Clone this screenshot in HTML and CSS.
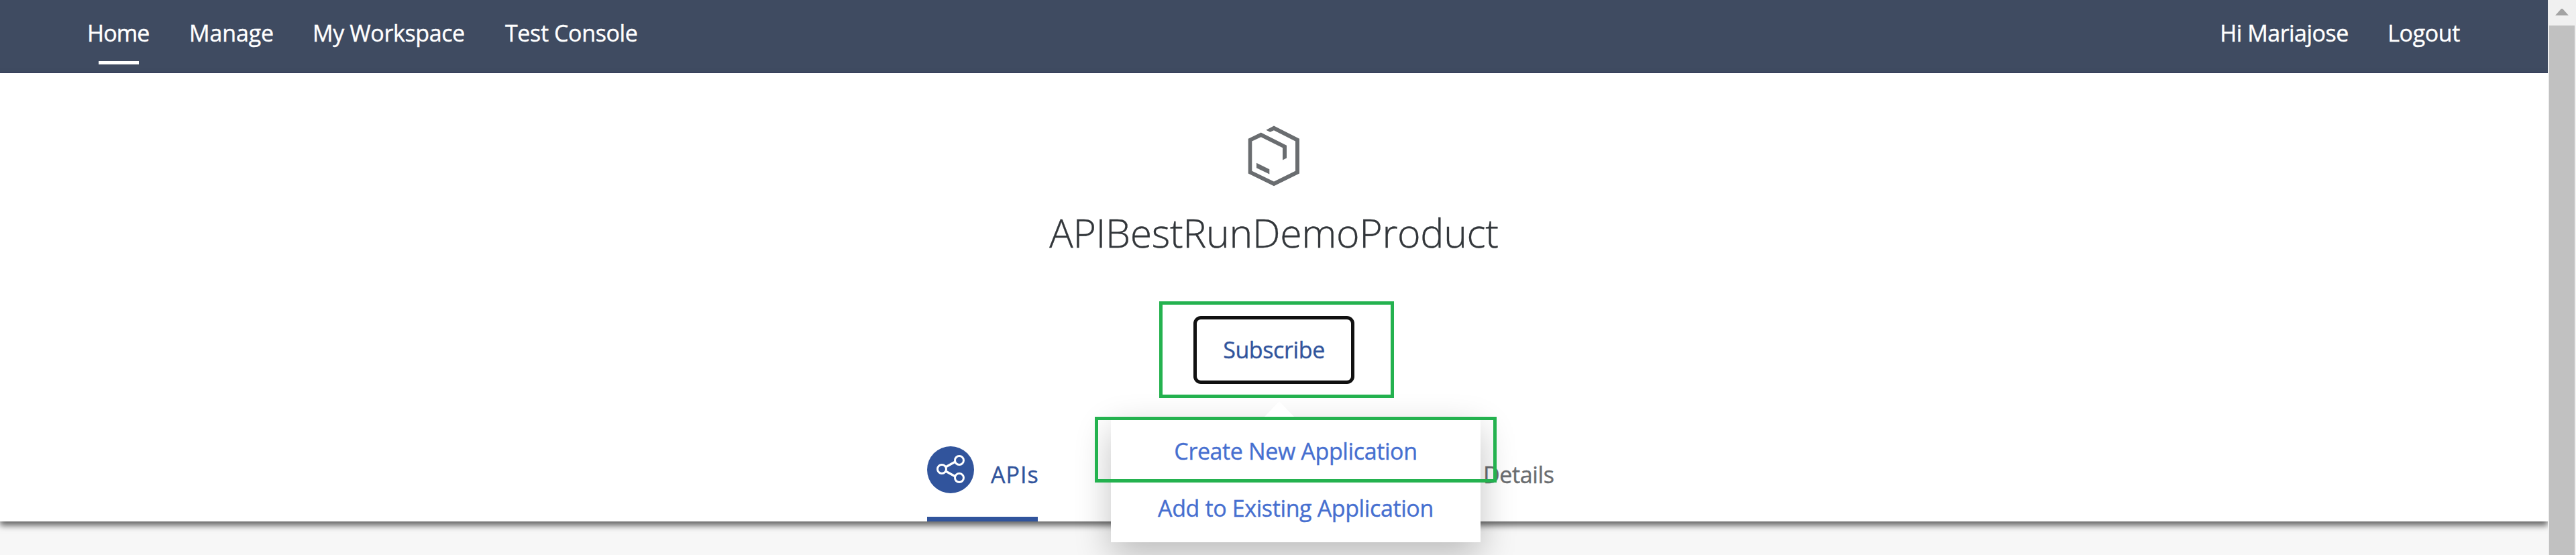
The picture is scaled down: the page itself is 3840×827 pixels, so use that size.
FILE: index.html
```html
<!DOCTYPE html>
<html lang="en">
<head>
<meta charset="utf-8">
<title>APIBestRunDemoProduct</title>
<link rel="stylesheet" href="styles.css">
</head>
<body>
<div class="window">
  <div class="page">
    <header class="topbar">
      <nav class="nav">
        <a class="nav-item active home">Home</a>
        <a class="nav-item manage">Manage</a>
        <a class="nav-item workspace">My Workspace</a>
        <a class="nav-item">Test Console</a>
      </nav>
      <div class="user">
        <a class="nav-item greeting">Hi Mariajose</a>
        <a class="nav-item">Logout</a>
      </div>
    </header>
    <main class="hero">
      <svg class="product-icon" width="78" height="92" viewBox="0 0 78 92">
        <g fill="#6a6d70">
          <path d="M27.3 9.8 39 3.5 77 22.8V74.5L39 93.2 .7 74.5V22.8L19.7 13.5 58 32.8V51.5L52 54.5V36.2L19.7 20.2 6.3 26.5V70.8L39 86.5 71 70.8V26.5L39 10.2 33.3 12.8Z" transform="translate(0 -3)"/>
          <path d="M13 58.8 32.3 68.2V75.5L13 66.2Z" transform="translate(0 -3)"/>
        </g>
      </svg>
      <h1 class="title">APIBestRunDemoProduct</h1>
      <div class="subscribe-wrap">
        <button class="subscribe">Subscribe</button>
        <div class="mark mark-subscribe"></div>
        <div class="popover">
          <div class="popover-arrow"></div>
          <a class="popover-item">Create New Application</a>
          <a class="popover-item">Add to Existing Application</a>
          <div class="mark mark-create"></div>
        </div>
      </div>
      <div class="tabs">
        <div class="tab selected">
          <svg class="tab-icon" width="70" height="70" viewBox="0 0 70 70">
            <circle cx="35" cy="35" r="35" fill="#31549c"/>
            <g fill="none" stroke="#fff" stroke-width="3">
              <path d="M28 30.8 42 23M28 37.2 42 45" stroke-width="3.4"/>
              <circle cx="22" cy="34" r="6.5"/>
              <circle cx="48" cy="21" r="6.5"/>
              <circle cx="48" cy="47" r="6.5"/>
            </g>
          </svg>
          <span class="tab-label apis">APIs</span>
        </div>
        <div class="tab">
          <span class="tab-label">Details</span>
        </div>
      </div>
    </main>
  </div>
  <div class="scrollbar">
    <svg class="arrow-up" width="20" height="10" viewBox="0 0 20 10"><path d="M0 10 9 0H11L20 10Z" fill="#a3a3a3"/></svg>
    <div class="thumb"></div>
  </div>
</div>
</body>
</html>
```
FILE: styles.css
```css
* { box-sizing: border-box; }

body {
  margin: 0;
  font-family: "Open Sans", sans-serif;
  font-size: 34px;
  letter-spacing: -0.38px;
  -webkit-text-stroke: 0.4px currentColor;
  overflow: hidden;
}

.window { display: flex; width: 3840px; height: 827px; }

.page {
  width: 3798px;
  height: 827px;
  background: #f7f7f7;
  overflow: hidden;
}

.topbar {
  height: 109px;
  background: #3f4b61;
  border-bottom: 2px solid #3b4560;
  display: flex;
  justify-content: space-between;
  padding: 0 131px 0 130px;
}

.nav { display: grid; grid-template-columns: 152px 184px 287px auto; }
.user { display: grid; grid-template-columns: 250px auto; }

.nav-item {
  color: #fff;
  line-height: 98px;
  white-space: nowrap;
}

.home { letter-spacing: -0.9px; }
.manage { letter-spacing: -0.14px; }
.greeting { letter-spacing: -0.5px; }

.active::after {
  content: "";
  display: block;
  width: 60px;
  height: 5px;
  margin: -7px 0 0 17px;
  background: #fff;
}

.hero {
  position: relative;
  height: 668px;
  background: #fff;
  box-shadow: 0 6px 9px rgba(0, 0, 0, 0.6);
  display: flex;
  flex-direction: column;
  align-items: center;
}

.product-icon { margin-top: 78px; overflow: visible; flex: none; }

.title {
  margin: 27px 0 0;
  font-size: 59px;
  font-weight: 300;
  line-height: 80px;
  letter-spacing: -0.35px;
  color: #32363a;
}

.subscribe-wrap { position: relative; margin-top: 85px; width: 240px; height: 101px; }

.subscribe {
  display: block;
  width: 240px;
  height: 101px;
  padding: 0 0 1px;
  border: 5px solid #111;
  border-radius: 11px;
  background: #fff;
  color: #31549c;
  font: inherit;
  letter-spacing: inherit;
}

.mark { position: absolute; border: 5px solid #24b24f; pointer-events: none; }
.mark-subscribe { left: -51px; top: -22px; width: 350px; height: 144px; }
.mark-create { left: -24px; top: 0; width: 599px; height: 98px; }

.popover {
  position: absolute;
  z-index: 2;
  left: -123px;
  top: 150px;
  width: 551px;
  height: 187px;
  padding-top: 9px;
  background: #fff;
  box-shadow: 0 20px 50px rgba(0, 0, 0, 0.24);
}

.popover-arrow {
  position: absolute;
  left: 228px;
  top: -23px;
  width: 46px;
  height: 24px;
  background: #fff;
  clip-path: polygon(50% 0, 100% 100%, 0 100%);
}

.popover-item {
  display: block;
  text-align: center;
  line-height: 85px;
  color: #466fd0;
  white-space: nowrap;
}

.tabs {
  align-self: stretch;
  flex: 1;
  margin-top: 54px;
  padding-left: 1382px;
  display: flex;
}

.tab {
  display: flex;
  height: 151px;
  padding-top: 39px;
  color: #6a6d70;
}

.tab.selected {
  width: 165px;
  margin-right: 664px;
  border-bottom: 7px solid #31549c;
  color: #31549c;
}

.tab-icon { flex: none; margin-right: 25px; }
.tab-label { line-height: 84px; white-space: nowrap; }
.apis { letter-spacing: 1px; }

.scrollbar {
  width: 42px;
  height: 827px;
  background: #f0f0f0;
  padding: 13px 2px 0;
  display: flex;
  flex-direction: column;
}

.arrow-up { margin-left: 9px; flex: none; }
.thumb { flex: 1; margin-top: 15px; background: #c1c1c1; }
```
